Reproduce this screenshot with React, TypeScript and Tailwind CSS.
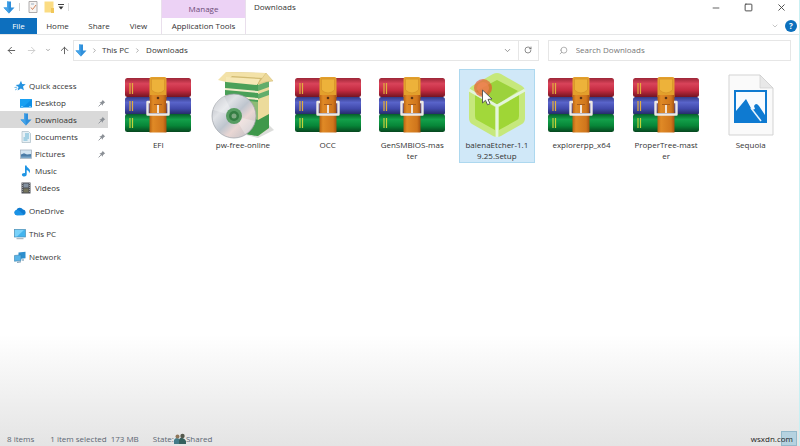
import type { ReactNode } from "react";
import { ArrowLeft, ArrowRight, ArrowUp, ChevronDown, ChevronRight, Minus, RotateCw, Search, Square, X } from "lucide-react";

type FileKind = "archive" | "installer" | "etcher" | "image";

interface FileItem {
  lines: string[];
  kind: FileKind;
  selected?: boolean;
}

const files: FileItem[] = [
  { lines: ["EFI"], kind: "archive" },
  { lines: ["pw-free-online"], kind: "installer" },
  { lines: ["OCC"], kind: "archive" },
  { lines: ["GenSMBIOS-mas", "ter"], kind: "archive" },
  { lines: ["balenaEtcher-1.1", "9.25.Setup"], kind: "etcher", selected: true },
  { lines: ["explorerpp_x64"], kind: "archive" },
  { lines: ["ProperTree-mast", "er"], kind: "archive" },
  { lines: ["Sequoia"], kind: "image" },
];

function DownArrow() {
  return (
    <svg viewBox="0 0 12 13" className="h-[13px] w-3 shrink-0">
      <path d="M4 0.5h4v6h3.5L6 12.5 0.5 6.5H4z" fill="#2f8fdb" />
      <path d="M4 0.5h1.5v7L6 12.5 0.5 6.5H4z" fill="#45a3e8" />
    </svg>
  );
}

function StarIcon() {
  return (
    <svg viewBox="0 0 12 12" className="size-3 shrink-0">
      <path d="M7 .8l1.200 3.300 3.500.2-2.700 2.300.9 3.700-3-1.900-3.300 2.100.9-3.600L1.600 5l3.600-.4z" fill="#2593e0" />
      <path d="M.5 7.500l2.600-.3M1 10l2.400-1.400" stroke="#6fb9ea" />
    </svg>
  );
}

function DesktopIcon() {
  return (
    <svg viewBox="0 0 12 12" className="size-3 shrink-0">
      <rect x="0" y="2" width="12" height="8.5" rx=".5" fill="#0d8fe6" />
      <path d="M0 2h12L3 10.500H0z" fill="#18a0f2" />
      <path d="M1 9.500h2M9 9.500h2" stroke="#9ad8ff" strokeWidth=".7" />
    </svg>
  );
}

function DocumentIcon() {
  return (
    <svg viewBox="0 0 12 12" className="size-3 shrink-0">
      <path d="M2 .5h6.500L10.500 2.500v9H2z" fill="#e6f0f5" stroke="#a9bac4" strokeWidth=".7" />
      <path d="M5 3h4M5 5h4M3.500 7h5.500M3.500 9h4" stroke="#55a9cf" strokeWidth=".9" />
    </svg>
  );
}

function PictureIcon() {
  return (
    <svg viewBox="0 0 12 12" className="size-3 shrink-0">
      <rect x=".4" y="2" width="11.200" height="8.500" fill="#d3e5f2" stroke="#a5b3c0" strokeWidth=".8" />
      <path d="M1 6.500l3-1.300 3 1.300 4-.5v4H1z" fill="#4b7da8" />
      <path d="M1 8.500h10V10H1z" fill="#79a6c9" />
    </svg>
  );
}

function MusicIcon() {
  return (
    <svg viewBox="0 0 12 12" className="size-3 shrink-0">
      <path d="M5 .5h1.500c.2 2.200 3.500 2.900 3.500 5.500 0 1-.5 1.800-1 2.300.3-2-.9-2.800-2.300-3.300v4.300c0 1.400-1.100 2.200-2.400 2.200S1.900 10.700 1.900 9.700 3.300 7.800 5 8.200z" fill="#1f95e4" />
    </svg>
  );
}

function VideoIcon() {
  return (
    <svg viewBox="0 0 12 12" className="size-3 shrink-0">
      <rect x="1.500" y=".5" width="9" height="11" fill="#4c4f56" />
      <rect x="3.500" y="1.500" width="5" height="4" fill="#8391a0" />
      <rect x="3.500" y="6.500" width="5" height="4" fill="#75745c" />
      <path d="M2.500 1v10M9.500 1v10" stroke="#b9bcc2" strokeWidth=".7" strokeDasharray="1 1" />
    </svg>
  );
}

function CloudIcon() {
  return (
    <svg viewBox="0 0 12 12" className="size-3 shrink-0">
      <path d="M2.700 10.200a2.700 2.700 0 0 1-.3-5.300A3.800 3.800 0 0 1 9 4.500a2.900 2.900 0 0 1 .5 5.700z" fill="#0f7bd0" />
      <path d="M2.700 10.200a2.700 2.700 0 0 1-.3-5.200c2-.4 3 .5 7.900 5z" fill="#1a93e6" />
    </svg>
  );
}

function PcIcon() {
  return (
    <svg viewBox="0 0 12 12" className="size-3 shrink-0">
      <rect x=".5" y="1.500" width="11" height="7.500" fill="#43b4ee" stroke="#4d91b7" strokeWidth=".7" />
      <path d="M1 2h9L3 8.500H1z" fill="#79d2fa" />
      <path d="M2.500 10.700h7" stroke="#9aaab5" />
    </svg>
  );
}

function NetworkIcon() {
  return (
    <svg viewBox="0 0 12 12" className="size-3 shrink-0">
      <path d="M4.500 1.500L11.500 .8v6.500l-7 .7z" fill="#2d8fce" />
      <path d="M.5 4.500l6.500-.6v5.600l-6.500.8z" fill="#58b4e8" stroke="#3681b0" strokeWidth=".6" />
      <path d="M3 11.300l4-.5M9 8v2" stroke="#668ca5" />
    </svg>
  );
}

function PinIcon() {
  return (
    <svg viewBox="0 0 8 8" className="size-2 shrink-0">
      <path d="M4.500.8l2.700 2.700-.8.200-1.500 1.500-.1 1.500L1.400 3.300l1.500-.1 1.500-1.500z" fill="#8b9096" />
      <path d="M.6 7.400l2.500-2.500" stroke="#8b9096" strokeWidth=".9" />
    </svg>
  );
}

function ArchiveIcon() {
  return (
    <svg viewBox="0 0 66 58" className="h-[58px] w-[66px]">
      <defs>
        <linearGradient id="red" x2="0" y2="1">
          <stop stopColor="#9c2637" />
          <stop offset=".3" stopColor="#d9435a" />
          <stop offset=".65" stopColor="#c42b41" />
          <stop offset="1" stopColor="#741522" />
        </linearGradient>
        <linearGradient id="blue" x2="0" y2="1">
          <stop stopColor="#343b87" />
          <stop offset=".3" stopColor="#5964ca" />
          <stop offset=".65" stopColor="#4149ab" />
          <stop offset="1" stopColor="#23285f" />
        </linearGradient>
        <linearGradient id="green" x2="0" y2="1">
          <stop stopColor="#075f2a" />
          <stop offset=".3" stopColor="#13a04a" />
          <stop offset=".65" stopColor="#078638" />
          <stop offset="1" stopColor="#07461f" />
        </linearGradient>
        <linearGradient id="strap">
          <stop stopColor="#b96311" />
          <stop offset=".2" stopColor="#e08a26" />
          <stop offset=".8" stopColor="#d0761c" />
          <stop offset="1" stopColor="#a55110" />
        </linearGradient>
      </defs>
      <rect y="2" width="66" height="19" rx="2.500" fill="url(#red)" />
      <rect y="21" width="66" height="18" rx="2.500" fill="url(#blue)" />
      <rect y="38" width="66" height="18" rx="2.500" fill="url(#green)" />
      <g fill="none" stroke="#e2ad3e" strokeWidth="1.200">
        <path d="M5 7v11M7.500 7v11M5 25v10M7.500 25v10" />
        <path d="M5 42v10M7.500 42v10" stroke="#c5d13b" />
      </g>
      <rect x="24.500" y="38" width="17" height="18.500" fill="url(#strap)" />
      <path d="M24.500 3q0-2 2-2h13q2 0 2 2v18h-17z" fill="#e3a02c" />
      <path d="M26.500 3h13v11q-6.500 6-13 0z" fill="#edb23a" stroke="#d4922a" strokeWidth=".7" />
      <path d="M24.500 19h17v18h-17z" fill="url(#strap)" />
      <circle cx="33" cy="22" r="1.300" fill="#5b3415" />
      <path d="M25 26h-2.500v12.500h21V26H41" fill="none" stroke="#eee9e4" strokeWidth="2.400" strokeLinejoin="round" />
      <path d="M33 28.500v8.500" stroke="#f5eee8" strokeWidth="1.800" />
      <path d="M29 28.500h8" stroke="#a85c1b" />
    </svg>
  );
}

function InstallerIcon() {
  return (
    <svg viewBox="0 0 66 68" className="h-[68px] w-[66px]">
      <defs>
        <linearGradient id="disc" x2="1" y2="1">
          <stop stopColor="#a9adb4" />
          <stop offset=".3" stopColor="#e0e2e6" />
          <stop offset=".5" stopColor="#bec5ce" />
          <stop offset=".65" stopColor="#ead7d4" />
          <stop offset="1" stopColor="#b5b9c1" />
        </linearGradient>
      </defs>
      <path d="M36 64l12 3 16-8-5-5z" fill="#dcdddb" />
      <path d="M15 10l33 3v52l-33-6z" fill="#4aa058" />
      <path d="M15 27l33 4v18l-33-4z" fill="#8dbb75" />
      <path d="M48 13l11-4v48l-11 8z" fill="#ecdb9b" />
      <path d="M15 17l33 3v2l-33-3zM15 24l33 3v2l-33-3z" fill="#f1ebc9" />
      <path d="M48 14l11-4v6l-11 4zM48 23l11-4v5l-11 4z" fill="#62ad6b" />
      <path d="M36 46l12 3v16l-12-2zM48 49l11-6v14l-11 8z" fill="#3f984b" />
      <path d="M16 1l40 1-7 11-34-3z" fill="#d2bb72" />
      <path d="M16 1L8 9l8 2 6-6 32 2 2-5z" fill="#f3e2a8" />
      <path d="M16 6l34 2-3 6-31-3z" fill="#f6e8b5" />
      <path d="M56 2l7 8-8 1-7 2z" fill="#ecd898" stroke="#cfb76c" strokeWidth=".5" />
      <circle cx="24" cy="45" r="22" fill="url(#disc)" stroke="#9b9fa6" strokeWidth=".7" />
      <path d="M24 45L3 39q3-10 11-14zM24 45l21 5q-3 9-10 13z" fill="#fff" opacity=".3" />
      <circle cx="24" cy="45" r="8" fill="#579c62" />
      <circle cx="24" cy="45" r="5" fill="#347d42" />
      <circle cx="24" cy="45" r="2.500" fill="#80aa83" />
    </svg>
  );
}

function EtcherIcon() {
  return (
    <svg viewBox="0 0 62 66" className="h-[66px] w-[62px]">
      <path d="M31 1q2 0 4 1l21 12q3 2 3 6v26q0 4-3 6L35 64q-4 2-8 0L6 52q-3-2-3-6V20q0-4 3-6L27 2q2-1 4-1z" fill="#c6e87c" />
      <path d="M31 8l21 11-21 14L10 19z" fill="#9cd23c" />
      <path d="M9 23l20 12v23L11 48q-2-1-2-4z" fill="#a2d83a" />
      <path d="M53 23L33 35v23l18-10q2-1 2-4z" fill="#9fd636" />
      <path d="M3 18l28 16 28-16M31 34v31" fill="none" stroke="#e3f5dc" strokeWidth="2.800" />
      <circle cx="17" cy="16" r="9" fill="#e9512e" opacity=".65" />
      <circle cx="17" cy="16" r="6" fill="#f18655" opacity=".7" />
      <path d="M16.500 18v13l3-2.700 2 4.500 2.500-1.100-2-4.300 4-.4z" fill="#fff" stroke="#4e4e50" strokeWidth=".9" />
    </svg>
  );
}

function ImageIcon() {
  return (
    <svg viewBox="0 0 46 62" className="h-[62px] w-[46px]">
      <path d="M1 1h31l13 13v47H1z" fill="#fafafa" stroke="#d3d3d3" />
      <path d="M32 1v13h13z" fill="#e8e8e8" stroke="#cfcfcf" strokeWidth=".7" />
      <rect x="6" y="16" width="33" height="33" fill="#0e7ad1" />
      <path d="M8 18h29v23l-6-9q-3-4-5 0l1 3-3 1L18 25 8 37z" fill="#f7fbff" />
      <path d="M23 34l10 13" stroke="#e8f4fd" strokeWidth="1.500" />
    </svg>
  );
}

function FileIcon({ kind }: { kind: FileKind }) {
  if (kind === "installer") return <InstallerIcon />;
  if (kind === "etcher") return <EtcherIcon />;
  if (kind === "image") return <ImageIcon />;
  return <ArchiveIcon />;
}

function TitleBar() {
  return (
    <header className="grid grid-cols-[161px_85px_1fr] border-b border-[#e5e6e7]">
      <div>
        <div className="flex h-[18px] items-center gap-1 pb-1 pl-[3px]">
          <DownArrow />
          <span className="h-2 w-px bg-[#cfcfcf]" />
          <button aria-label="Properties" className="ml-1">
            <svg viewBox="0 0 10 12" className="h-3 w-2.5">
              <path d="M1 .5h8v11H1z" fill="#f7f4f2" stroke="#9d9999" strokeWidth=".8" />
              <path d="M3 6.500l1.500 2L8 4" fill="none" stroke="#d1855d" />
              <path d="M3 3h3" stroke="#9cafc1" />
            </svg>
          </button>
          <button aria-label="New folder" className="ml-0.5">
            <svg viewBox="0 0 10 12" className="h-3 w-2.5">
              <path d="M.5.500h9v11h-9z" fill="#fbdc83" />
              <path d="M7 7h3v5H7z" fill="#f1c75a" />
            </svg>
          </button>
          <button aria-label="Customize">
            <svg viewBox="0 0 6 6" className="size-1.5">
              <path d="M0 .5h6" stroke="#444" />
              <path d="M.5 2.500h5L3 5.500z" fill="#333" />
            </svg>
          </button>
          <span className="h-2 w-px bg-[#dcdcdc]" />
        </div>
        <nav className="grid h-4 grid-cols-[37px_41px_42px_37px] items-center text-center">
          <button className="h-full bg-[#0d6fbe] text-white">File</button>
          <button>Home</button>
          <button>Share</button>
          <button>View</button>
        </nav>
      </div>
      <div className="border-x border-[#e9dfec] text-center">
        <div className="h-[18px] bg-[#ecd2f5] pt-[3px] text-[#6d4c78]">Manage</div>
        <button className="h-4 whitespace-nowrap">Application Tools</button>
      </div>
      <div className="flex flex-col">
        <div className="flex h-[18px] items-start justify-between pl-2">
          <h1 className="pt-px">Downloads</h1>
          <div className="flex gap-[23px] pr-3 pt-0.5 text-[#444]">
            <button aria-label="Minimize"><Minus size={10} strokeWidth={2} /></button>
            <button aria-label="Maximize"><Square size={9} strokeWidth={2.500} /></button>
            <button aria-label="Close"><X size={11} strokeWidth={2} /></button>
          </div>
        </div>
        <div className="flex h-4 items-center justify-end gap-1.5 pr-0.5">
          <button aria-label="Collapse ribbon"><ChevronDown size={8} color="#aaa" /></button>
          <button aria-label="Help" className="flex size-3 items-center justify-center rounded-full bg-[#0c70bd] font-bold text-white">?</button>
        </div>
      </div>
    </header>
  );
}

function AddressBar() {
  return (
    <div className="flex h-[30px] items-center pl-1.5 pr-2 text-[#555]">
      <div className="flex w-[67px] items-center">
        <button aria-label="Back"><ArrowLeft size={11} /></button>
        <button aria-label="Forward" className="ml-[9px]"><ArrowRight size={11} color="#ccc" /></button>
        <button aria-label="Recent locations" className="ml-2"><ChevronDown size={6} /></button>
        <button aria-label="Up" className="ml-2"><ArrowUp size={11} /></button>
      </div>
      <div className="flex h-[21px] flex-1 items-center border border-[#e6e6e6] pl-px text-[#333]">
        <DownArrow />
        <ChevronRight size={7} className="mx-1 text-[#777]" />
        <button>This PC</button>
        <ChevronRight size={7} className="mx-[5px] text-[#777]" />
        <button>Downloads</button>
        <button aria-label="Previous locations" className="ml-auto mr-1.5"><ChevronDown size={9} color="#777" /></button>
        <button aria-label="Refresh" className="flex h-full w-5 items-center justify-center border-l border-[#e6e6e6]">
          <RotateCw size={8} color="#555" />
        </button>
      </div>
      <label className="ml-[9px] flex h-[21px] w-[31%] items-center border border-[#e6e6e6] pl-2.5">
        <Search size={9} className="-scale-x-100 text-[#999]" />
        <input aria-label="Search Downloads" placeholder="Search Downloads" className="ml-2 min-w-0 flex-1 outline-none placeholder:text-[#777]" />
      </label>
    </div>
  );
}

interface NavItemProps {
  icon: ReactNode;
  label: string;
  nested?: boolean;
  pinned?: boolean;
  active?: boolean;
}

function NavItem({ icon, label, nested, pinned, active }: NavItemProps) {
  return (
    <button className={`flex h-[17px] w-full items-center gap-[3px] pr-0.5 text-left ${nested ? "pl-5" : "pl-3.5"} ${active ? "bg-[#d9d9d9]" : ""}`}>
      {icon}
      <span className="flex-1">{label}</span>
      {pinned && <PinIcon />}
    </button>
  );
}

function Sidebar() {
  return (
    <nav className="flex w-[108px] shrink-0 flex-col gap-1.5 pt-2">
      <div>
        <NavItem icon={<StarIcon />} label="Quick access" />
        <NavItem icon={<DesktopIcon />} label="Desktop" nested pinned />
        <NavItem icon={<DownArrow />} label="Downloads" nested pinned active />
        <NavItem icon={<DocumentIcon />} label="Documents" nested pinned />
        <NavItem icon={<PictureIcon />} label="Pictures" nested pinned />
        <NavItem icon={<MusicIcon />} label="Music" nested />
        <NavItem icon={<VideoIcon />} label="Videos" nested />
      </div>
      <NavItem icon={<CloudIcon />} label="OneDrive" />
      <NavItem icon={<PcIcon />} label="This PC" />
      <NavItem icon={<NetworkIcon />} label="Network" />
    </nav>
  );
}

function StatusBar() {
  return (
    <footer className="flex h-[15px] items-center pl-[7px] pr-0.5 text-[#5c6673]">
      <span>8 items</span>
      <span className="ml-4">1 item selected</span>
      <span className="ml-1">173 MB</span>
      <span className="ml-3.5">State:</span>
      <svg viewBox="0 0 12 12" className="size-3">
        <path d="M0 11V7q1-2 3-2t4 3v3z" fill="#437b88" />
        <path d="M5 11V7q1-3 3.500-2T12 8v3z" fill="#34605d" />
        <circle cx="3.500" cy="3.500" r="2" fill="#8f765a" />
        <circle cx="8.500" cy="3" r="2.200" fill="#55594d" />
      </svg>
      <span>Shared</span>
      <div className="relative ml-auto flex h-full items-center">
        <span className="absolute right-0 top-0 h-full w-4 border border-[#93b9cb] bg-[#b5d2e0]" />
        <span className="relative pr-1 text-[#222]">wsxdn.com</span>
      </div>
    </footer>
  );
}

export default function App() {
  return (
    <div className="flex min-h-screen flex-col border-r border-[#c9f0f3] bg-linear-to-b from-white from-75% to-[#e4e4e4] font-['Open_Sans',sans-serif] text-[8px] leading-3 text-[#333]">
      <TitleBar />
      <AddressBar />
      <div className="flex flex-1 pt-1">
        <Sidebar />
        <main className="grid flex-1 grid-cols-8 content-start pl-2 pr-1.5">
          {files.map((file) => (
            <button
              key={file.lines[0]}
              className={`mx-1 flex h-[94px] flex-col items-center border ${file.selected ? "border-[#add8ef] bg-[#d0e8f8]" : "border-transparent"}`}
            >
              <span className="flex h-[69px] items-center justify-center">
                <FileIcon kind={file.kind} />
              </span>
              <span className="whitespace-nowrap leading-[11px]">
                {file.lines.map((line) => (
                  <span key={line} className="block">{line}</span>
                ))}
              </span>
            </button>
          ))}
        </main>
      </div>
      <StatusBar />
    </div>
  );
}
